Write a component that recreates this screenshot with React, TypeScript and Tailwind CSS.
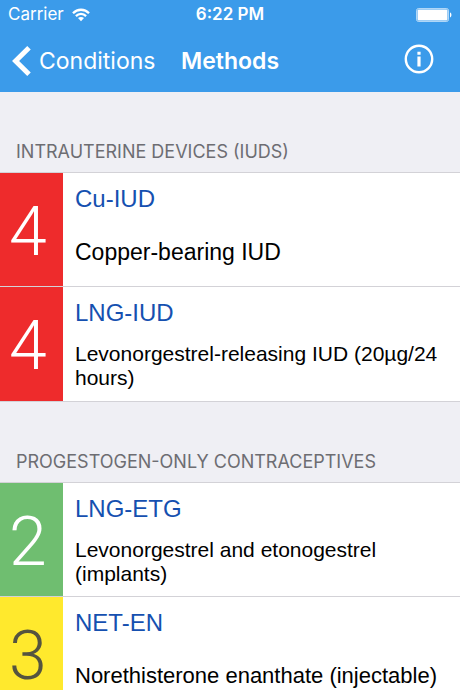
type Tone = "red" | "green" | "yellow";

interface Method {
  code: string;
  description: string;
  category: number;
  tone: Tone;
  textSize: string;
}

interface Group {
  title: string;
  methods: Method[];
}

const tones: Record<Tone, string> = {
  red: "bg-[#ee2b2c] text-white",
  green: "bg-[#6fbe70] text-white",
  yellow: "bg-[#ffe92d] text-[#55543f]",
};

const groups: Group[] = [
  {
    title: "INTRAUTERINE DEVICES (IUDS)",
    methods: [
      { code: "Cu-IUD", description: "Copper-bearing IUD", category: 4, tone: "red", textSize: "text-[23px]" },
      {
        code: "LNG-IUD",
        description: "Levonorgestrel-releasing IUD (20µg/24 hours)",
        category: 4,
        tone: "red",
        textSize: "text-[21px]",
      },
    ],
  },
  {
    title: "PROGESTOGEN-ONLY CONTRACEPTIVES",
    methods: [
      {
        code: "LNG-ETG",
        description: "Levonorgestrel and etonogestrel (implants)",
        category: 2,
        tone: "green",
        textSize: "text-[21px]",
      },
      {
        code: "NET-EN",
        description: "Norethisterone enanthate (injectable)",
        category: 3,
        tone: "yellow",
        textSize: "text-[22px]",
      },
    ],
  },
];

function WifiIcon() {
  return (
    <svg width="18" height="14" viewBox="0 0 18 14" fill="none" stroke="currentColor" strokeWidth="2.3" aria-hidden="true">
      <path d="M1 5.2C5.4 0.6 12.6 0.6 17 5.2" />
      <path d="M3.9 8.1C6.8 5.2 11.2 5.2 14.1 8.1" />
      <path d="M9 13.2L6 10.1C7.7 8.5 10.3 8.5 12 10.1Z" fill="currentColor" stroke="none" />
    </svg>
  );
}

function BatteryIcon() {
  return (
    <svg width="36" height="14" viewBox="0 0 36 14" fill="none" aria-hidden="true">
      <rect x="0.5" y="0.5" width="32" height="13" rx="2" stroke="currentColor" strokeOpacity="0.6" />
      <rect x="1.5" y="1.5" width="30" height="11" rx="1" fill="currentColor" />
      <path d="M34 4.6C35.9 5 35.9 9 34 9.4Z" fill="currentColor" />
    </svg>
  );
}

function MethodRow({ method }: { method: Method }) {
  return (
    <li className="flex h-[114px]">
      <div
        className={`flex w-[63px] shrink-0 items-center pt-1 pl-[9px] font-[Roboto,sans-serif] text-[68px] leading-[56px] font-light ${tones[method.tone]}`}
      >
        {method.category}
      </div>
      <div className="min-w-0 flex-1 pt-3 pr-4 pl-3 font-['Liberation_Sans',Arial,sans-serif]">
        <h3 className="text-[24px] leading-7 text-[#1550b0]">{method.code}</h3>
        <div className="mt-3 flex h-[54px] items-center">
          <p className={`leading-6 text-black ${method.textSize}`}>{method.description}</p>
        </div>
      </div>
    </li>
  );
}

export default function App() {
  return (
    <div className="flex h-screen flex-col overflow-hidden bg-[#efeff4] font-[Inter,sans-serif]">
      <header className="shrink-0 bg-[#3b9bea] text-white">
        <div className="grid h-[30px] grid-cols-3 items-center px-2 text-[17px]">
          <span className="flex items-center gap-2">
            Carrier <WifiIcon />
          </span>
          <span className="text-center font-semibold">6:22 PM</span>
          <span className="flex justify-end">
            <BatteryIcon />
          </span>
        </div>
        <div className="grid h-[62px] grid-cols-[1fr_auto_1fr] items-center px-3 text-[23px]">
          <button type="button" className="flex items-center gap-2">
            <svg width="19" height="30" viewBox="0 0 19 30" fill="none" stroke="currentColor" strokeWidth="5" aria-hidden="true">
              <path d="M17 1.8L3.6 15L17 28.2" />
            </svg>
            Conditions
          </button>
          <h1 className="font-semibold">Methods</h1>
          <button type="button" aria-label="Information" className="mr-3.5 mb-1 justify-self-end">
            <svg width="30" height="30" viewBox="0 0 30 30" fill="none" aria-hidden="true">
              <circle cx="15" cy="15" r="13.2" stroke="currentColor" strokeWidth="2.4" />
              <path d="M13.4 7.8h3.2v2.9h-3.2zM13.4 12.4h3.2v10h-3.2z" fill="currentColor" />
            </svg>
          </button>
        </div>
      </header>
      <main className="min-h-0 flex-1 overflow-y-auto [scrollbar-width:none]">
        {groups.map((group) => (
          <section key={group.title}>
            <h2 className="flex h-20 items-end px-4 pb-2 text-[18px] leading-6 text-[#6d6d72]">{group.title}</h2>
            <ul className="divide-y divide-[#d3d2d7] border-y border-[#d3d2d7] bg-white">
              {group.methods.map((method) => (
                <MethodRow key={method.code} method={method} />
              ))}
            </ul>
          </section>
        ))}
      </main>
    </div>
  );
}
